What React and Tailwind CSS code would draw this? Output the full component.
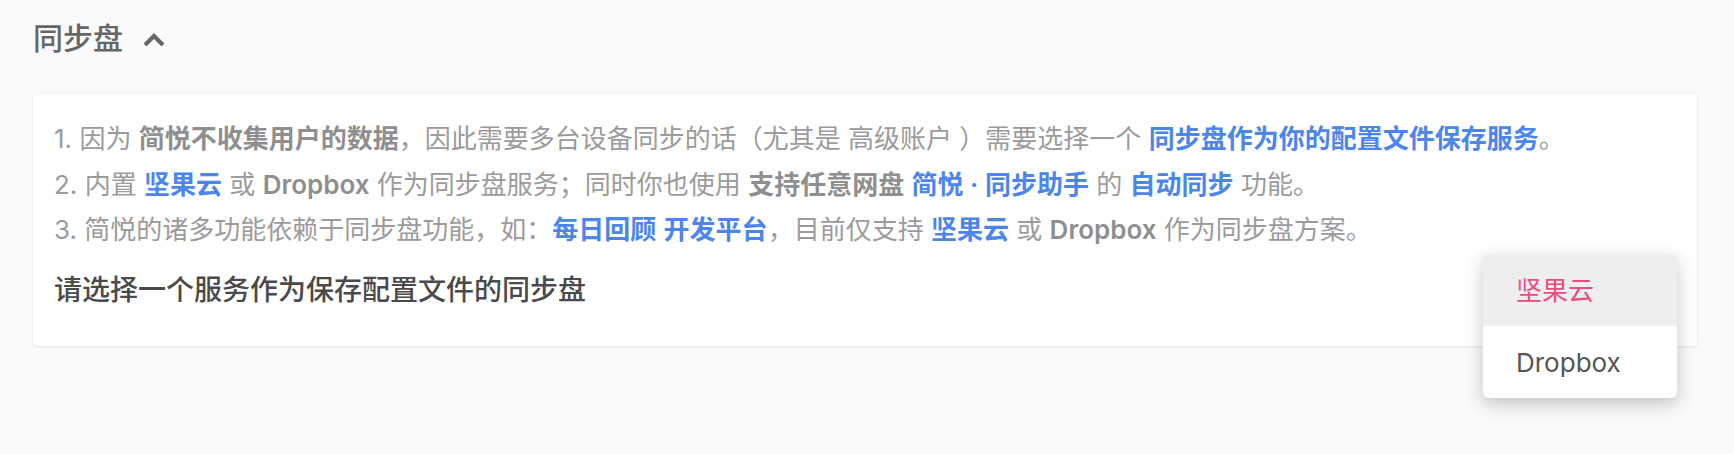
import { useState } from "react";

const font = { fontFamily: 'Inter, "Noto Sans CJK SC", sans-serif' };

const B = ({ children }) => <span className="font-semibold text-[#8f8f8f]">{children}</span>;
const L = ({ children }) => <span className="font-semibold text-[#4c86ec]">{children}</span>;

const services = ["坚果云", "Dropbox"];

export default function App() {
  const [open, setOpen] = useState(true);
  const [active] = useState("坚果云");

  return (
    <div
      className="h-[454px] w-full overflow-hidden bg-[#fafafa] pl-[33px] pr-[37px] pt-[16px]"
      style={font}
    >
      {/* 标题 */}
      <div className="flex items-center gap-[21px] text-[30px] font-medium leading-[45px] text-[#666]">
        <span>同步盘</span>
        <svg width="20" height="13" viewBox="0 0 20 13" fill="none" className="mt-[1px]">
          <path d="M2.5 10.5 L10 3 L17.5 10.5" stroke="#666" strokeWidth="4.2" strokeLinecap="square" />
        </svg>
      </div>

      {/* 卡片 */}
      <div className="relative mt-[33px] rounded-[4px] bg-white px-[21px] pb-[35px] pt-[22px] shadow-[0_1px_3px_rgba(0,0,0,0.1)]">
        <ul className="text-[26px] leading-[1.75] text-[#9b9b9b]">
          <li>
            1. 因为 <B>简悦不收集用户的数据</B>，因此需要多台设备同步的话（尤其是 高级账户 ）需要选择一个 <L>同步盘作为你的配置文件保存服务</L>。
          </li>
          <li>
            2. 内置 <L>坚果云</L> 或 <B>Dropbox</B> 作为同步盘服务；同时你也使用 <B>支持任意网盘</B> <L>简悦 · 同步助手</L> 的 <L>自动同步</L> 功能。
          </li>
          <li>
            3. 简悦的诸多功能依赖于同步盘功能，如：<L>每日回顾</L> <L>开发平台</L>，目前仅支持 <L>坚果云</L> 或 <B>Dropbox</B> 作为同步盘方案。
          </li>
        </ul>
        <div className="mt-[16px] text-[28px] font-medium leading-[42px] text-[#4a4a4a]">请选择一个服务作为保存配置文件的同步盘</div>

        {open && (
          <div className="absolute right-[20px] top-[160px] w-[194px] overflow-hidden rounded-[6px] bg-white shadow-[0_6px_18px_rgba(0,0,0,0.22)]">
            {services.map((s) => (
              <div
                key={s}
                onClick={() => setOpen(false)}
                className={`flex h-[72px] items-center pl-[33px] text-[26px] ${
                  s === active ? "bg-[#eeeeee] text-[#ec4c7e]" : "text-[#555]"
                }`}
              >
                {s}
              </div>
            ))}
          </div>
        )}
      </div>
    </div>
  );
}
